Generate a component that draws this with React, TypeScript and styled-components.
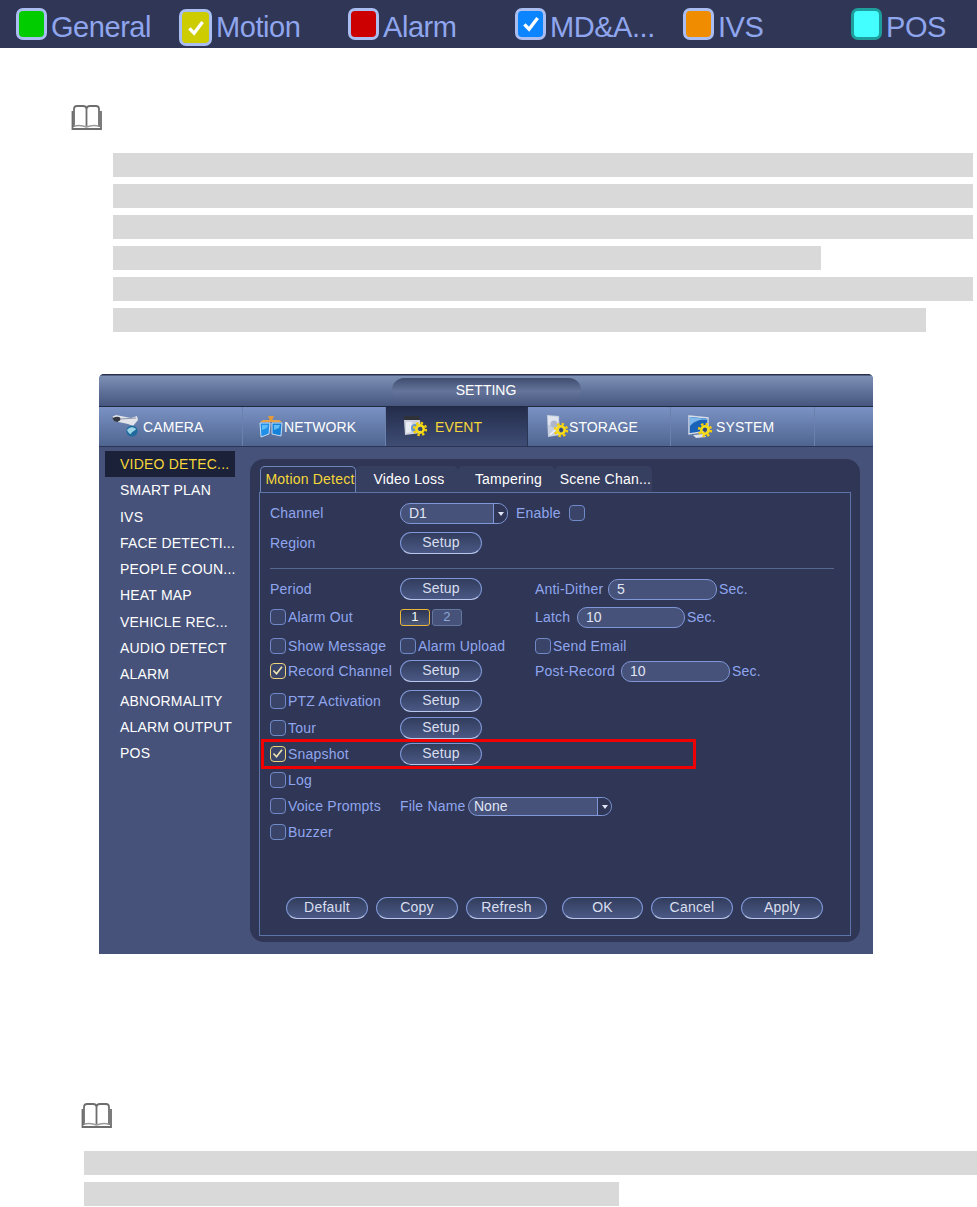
import React from 'react';
import styled, { createGlobalStyle } from 'styled-components';

const GlobalStyle = createGlobalStyle`
  html, body {
    margin: 0;
    padding: 0;
    background: #fff;
    font-family: "Liberation Sans", Arial, sans-serif;
  }
`;

const Page = styled.div`
  width: 977px;
  height: 1207px;
  overflow: hidden;
  display: flex;
  flex-direction: column;
`;

/* legend strip */
const Legend = styled.div`
  height: 48px;
  background: #2f3656;
  display: flex;
  padding-left: 16px;
  flex-shrink: 0;
`;
const LegendItem = styled.div<{ $width: number }>`
  width: ${(p) => p.$width}px;
  display: flex;
  align-items: flex-start;
  gap: 4px;
  color: #8fa6ee;
  font-size: 29px;
  letter-spacing: -0.45px;
`;
const LegendText = styled.span`
  margin-top: 11px;
  line-height: 33px;
`;
const Swatch = styled.div<{ $color: string; $ring?: string; $tall?: boolean }>`
  box-sizing: border-box;
  width: ${(p) => (p.$tall ? 33 : 31)}px;
  height: ${(p) => (p.$tall ? 37 : 32)}px;
  margin-top: ${(p) => (p.$tall ? 9 : 8)}px;
  border-radius: 7px;
  border: 3px solid ${(p) => p.$ring || '#a9bdf0'};
  background: ${(p) => p.$color};
  display: flex;
  align-items: center;
  justify-content: center;
  flex-shrink: 0;
`;

/* note blocks */
const NoteIcon = styled.div<{ $left: number; $top: number }>`
  margin: ${(p) => p.$top}px 0 0 ${(p) => p.$left}px;
  height: 25px;
  line-height: 0;
`;
const Bars = styled.div<{ $left: number; $top: number }>`
  margin: ${(p) => p.$top}px 0 0 ${(p) => p.$left}px;
  display: flex;
  flex-direction: column;
  gap: 7px;
`;
const Bar = styled.div<{ $width: number }>`
  height: 24px;
  width: ${(p) => p.$width}px;
  background: #d9d9d9;
`;

/* dvr window */
const Window = styled.div`
  margin: 42px 0 0 99px;
  width: 774px;
  height: 580px;
  flex-shrink: 0;
  display: flex;
  flex-direction: column;
  background: #465279;
  color: #fff;
  font-size: 14px;
  letter-spacing: 0.2px;
  border-radius: 5px 5px 0 0;
  overflow: hidden;
`;
const TitleBar = styled.div`
  box-sizing: border-box;
  height: 33px;
  display: flex;
  justify-content: center;
  align-items: center;
  background: linear-gradient(#26304a 0, #26304a 1px, #7d90b4 2px, #5f7199 55%, #46567f);
  border-bottom: 1px solid #1f2942;
`;
const TitlePill = styled.div`
  width: 189px;
  height: 24px;
  border-radius: 12px;
  background: linear-gradient(#3f4d70, #64749a 55%, #4f5e84);
  color: #fff;
  text-align: center;
  line-height: 24px;
  letter-spacing: 0;
`;
const TabBar = styled.div`
  box-sizing: border-box;
  height: 40px;
  display: flex;
  background: linear-gradient(#7a92c4, #4f6590);
  border-bottom: 1px solid #2a3556;
`;
const MainTab = styled.div<{ $active?: boolean; $width: number; $gap: number; $indent: number }>`
  box-sizing: border-box;
  width: ${(p) => p.$width}px;
  padding-left: ${(p) => p.$indent}px;
  display: flex;
  align-items: center;
  gap: ${(p) => p.$gap}px;
  color: ${(p) => (p.$active ? '#f5d63a' : '#fff')};
  background: ${(p) => (p.$active ? 'linear-gradient(#232c4a, #3f4d75)' : 'none')};
  border-right: 1px solid ${(p) => (p.$active ? '#2a3556' : '#6a80ad')};
  letter-spacing: 0.1px;
`;
const Body = styled.div`
  flex: 1;
  display: flex;
  min-height: 0;
`;
const SideMenu = styled.div`
  width: 151px;
  box-sizing: border-box;
  padding: 4px 0 0 6px;
  flex-shrink: 0;
`;
const SideItem = styled.div<{ $active?: boolean }>`
  width: 130px;
  height: 26.3px;
  line-height: 26.3px;
  padding-left: 15px;
  box-sizing: border-box;
  white-space: nowrap;
  color: ${(p) => (p.$active ? '#f5d63a' : '#fff')};
  background: ${(p) => (p.$active ? '#1a2138' : 'none')};
`;
const Panel = styled.div`
  width: 610px;
  margin: 12px 0;
  box-sizing: border-box;
  padding: 7px 9px 6px 9px;
  background: #2f3656;
  border-radius: 14px;
  display: flex;
  flex-direction: column;
`;
const SubTabs = styled.div`
  display: flex;
  height: 26px;
  padding-left: 1px;
  flex-shrink: 0;
`;
const SubTab = styled.div<{ $active?: boolean; $width: number }>`
  box-sizing: border-box;
  width: ${(p) => p.$width}px;
  padding-left: 4px;
  text-align: center;
  line-height: 26px;
  white-space: nowrap;
  color: ${(p) => (p.$active ? '#f5d63a' : '#fff')};
  background: ${(p) => (p.$active ? '#2f3656' : '#373f61')};
  border-radius: 5px 5px 0 0;
  ${(p) => p.$active && 'border: 1px solid #6f86bb; border-bottom: none; line-height: 24px;'}
`;
const Frame = styled.div`
  flex: 1;
  border: 1px solid #5d74a8;
  box-sizing: border-box;
  padding: 8px 17px 16px 10px;
  display: flex;
  flex-direction: column;
  color: #8fa6ee;
`;
const Row = styled.div<{ $gap?: number }>`
  position: relative;
  height: 24px;
  margin-top: ${(p) => p.$gap || 0}px;
  display: flex;
  align-items: center;
`;
const FirstCol = styled.div`
  width: 130px;
  display: flex;
  align-items: center;
  gap: 2px;
  white-space: nowrap;
  flex-shrink: 0;
`;
const MidCol = styled.div`
  width: 135px;
  display: flex;
  align-items: center;
  gap: 2px;
  white-space: nowrap;
  flex-shrink: 0;
`;
const Inline = styled.div`
  display: flex;
  align-items: center;
  gap: 2px;
  white-space: nowrap;
`;
const Caption = styled.span<{ $width?: number; $left?: number }>`
  display: inline-block;
  ${(p) => p.$width && `width: ${p.$width}px;`}
  ${(p) => p.$left && `margin-left: ${p.$left}px;`}
`;
const Divider = styled.div`
  height: 1px;
  background: #56688f;
  margin: 13px 0 8px 0;
  width: 564px;
`;
const Check = styled.div<{ $on?: boolean; $left?: number }>`
  box-sizing: border-box;
  width: 16px;
  height: 16px;
  border-radius: 4px;
  border: 1.5px solid ${(p) => (p.$on ? '#ecd27a' : '#7089c8')};
  background: #3a4468;
  line-height: 0;
  flex-shrink: 0;
  ${(p) => p.$left && `margin-left: ${p.$left}px;`}
`;
const OvalButton = styled.div<{ $width?: number }>`
  box-sizing: border-box;
  width: ${(p) => p.$width || 82}px;
  height: 22px;
  line-height: 19px;
  border-radius: 11px;
  border: 1.5px solid #7f97d6;
  border-bottom-color: #b9c7ec;
  background: linear-gradient(#323d5d, #4a5884);
  color: #d9dfef;
  text-align: center;
`;
const NumberButton = styled.div<{ $active?: boolean }>`
  box-sizing: border-box;
  width: 30px;
  height: 17px;
  line-height: 14px;
  border-radius: 3px;
  text-align: center;
  font-size: 13px;
  border: 1.5px solid ${(p) => (p.$active ? '#eab63a' : '#64789f')};
  background: ${(p) => (p.$active ? 'linear-gradient(#2d3654, #4c5878)' : '#46527a')};
  color: ${(p) => (p.$active ? '#f4f4f4' : '#8fa6d8')};
`;
const Field = styled.div<{ $width: number; $slim?: boolean }>`
  box-sizing: border-box;
  width: ${(p) => p.$width}px;
  height: ${(p) => (p.$slim ? 19 : 21)}px;
  line-height: ${(p) => (p.$slim ? 16 : 18)}px;
  padding-left: ${(p) => (p.$slim ? 5 : 8)}px;
  border-radius: 10px;
  border: 1.5px solid #7f97d6;
  background: #46527a;
  color: #e0e5f4;
  letter-spacing: 0;
  position: relative;
`;
const DropArrow = styled.div`
  position: absolute;
  top: 0;
  right: 0;
  bottom: 0;
  width: 13px;
  border-left: 1px solid #7f97d6;
  background: #2f3656;
  border-radius: 0 9px 9px 0;
  display: flex;
  align-items: center;
  justify-content: center;
  &::after {
    content: '';
    border: 3.5px solid transparent;
    border-top: 4px solid #dfe5f5;
    margin-top: 4px;
  }
`;
const Highlight = styled.div`
  position: absolute;
  left: -9px;
  top: -3px;
  width: 435px;
  height: 30px;
  box-sizing: border-box;
  border: 3px solid #f00000;
  pointer-events: none;
`;
const Footer = styled.div`
  margin-top: auto;
  padding-left: 16px;
  display: flex;
  gap: 8px;
`;
const FooterGroup = styled.div`
  display: flex;
  gap: 8px;
  & + & {
    margin-left: 7px;
  }
`;

const CheckMark = () => (
  <svg width="22" height="22" viewBox="0 0 16 16">
    <path d="M3.2 8.2 L6.6 11.8 L12.8 3.6" fill="none" stroke="#fff" strokeWidth="2.4" />
  </svg>
);

const Tick = () => (
  <svg width="13" height="13" viewBox="0 0 16 16">
    <path d="M3 8 L6.8 12 L13.5 3.5" fill="none" stroke="#f2e6b0" strokeWidth="2" />
  </svg>
);

const Book = () => (
  <svg width="32" height="25" viewBox="0 0 32 25">
    <path
      d="M3 22 L3 4 Q3 1 6 1 L12 1 Q15.5 1 15.5 4 L15.5 21 M15.5 4 Q15.5 1 19 1 L25 1 Q28 1 28 4 L28 22"
      fill="none"
      stroke="#6e6e6e"
      strokeWidth="1.8"
    />
    <path d="M1.5 6 L1.5 24 L30 24 L30 6" fill="none" stroke="#6e6e6e" strokeWidth="1.8" />
    <path d="M3 21 Q10 19.5 15.5 22 Q21 19.5 28 21" fill="none" stroke="#9a9a9a" strokeWidth="1.4" />
  </svg>
);

const Gear = ({ x, y }: { x: number; y: number }) => (
  <g transform={`translate(${x} ${y})`}>
    <circle r="6" fill="none" stroke="#f6cf0a" strokeWidth="2.4" strokeDasharray="2.4 2.3" />
    <circle r="3.7" fill="none" stroke="#f9dc14" strokeWidth="2.6" />
    <circle r="1.9" fill="#3a4668" />
  </g>
);

const CameraIcon = () => (
  <svg width="27" height="23" viewBox="0 0 27 23">
    <path d="M0 2 L4 0 L19 3 L25 1 L26 5 L21 11 L16 9 L2 6 Z" fill="#e2e4ea" />
    <path d="M0 2 L6 5 L6 7 L2 6 Z" fill="#23262f" />
    <ellipse cx="5" cy="4" rx="3.5" ry="2.3" fill="#343842" />
    <path d="M8 4 L24 3" stroke="#8d95a8" strokeWidth="1.2" />
    <circle cx="20" cy="16" r="5.6" fill="#1f6b9e" />
    <path d="M15 15 C17 12 21 11 24 14 C23 16 20 16 19 19 C17 19 16 17 15 15 Z" fill="#9ad3e6" />
  </svg>
);

const NetworkIcon = () => (
  <svg width="24" height="22" viewBox="0 0 24 22">
    <path d="M1 6 L4 4 L20 4 L23 6 Z" fill="#e8a347" />
    <path d="M9 0 L15 0 L13 5 L11 5 Z" fill="#e29a3c" />
    <path d="M1 7 L11 7 L10 18 L2 21 Z" fill="#1f8fe8" stroke="#e6f2fb" strokeWidth="0.8" />
    <path d="M13 7 L23 7 L22 20 L13 18 Z" fill="#1681da" stroke="#e6f2fb" strokeWidth="0.8" />
    <path d="M3 9 L9 9 L8 12 L3 14 Z" fill="#5fbcf5" />
    <path d="M15 9 L21 9 L20 12 L15 14 Z" fill="#5fbcf5" />
  </svg>
);

const EventIcon = () => (
  <svg width="24" height="21" viewBox="0 0 24 21">
    <path d="M1 0 L16 0 L17 4 L1 4 Z" fill="#30323a" />
    <path d="M1 4 L17 4 L18 17 L2 19 Z" fill="#cdd2dc" />
    <path d="M3 6 L9 6 L8 16 L3 17 Z" fill="#e9ecf2" />
    <circle cx="12" cy="12" r="4" fill="#6a9ad2" />
    <Gear x={17} y={13} />
  </svg>
);

const StorageIcon = () => (
  <svg width="22" height="23" viewBox="0 0 22 23">
    <path d="M0 0 L12 1 L13 20 L1 22 Z" fill="#c6cfdf" />
    <path d="M1 1 L11 2 L11 9 L1 10 Z" fill="#dfe5ef" />
    <circle cx="7" cy="9" r="3.5" fill="#aeb7ca" />
    <path d="M3 20 L10 13" stroke="#f1f3f8" strokeWidth="1.4" />
    <Gear x={14} y={15} />
  </svg>
);

const SystemIcon = () => (
  <svg width="28" height="24" viewBox="0 0 28 24">
    <path d="M1 1 L20 3 L20 16 L1 19 Z" fill="#1b63b8" stroke="#d6dce8" strokeWidth="1.4" />
    <path d="M2 11 C7 5 14 4 19 5 L19 4 L2 2 Z" fill="#7fb8ea" />
    <path d="M5 20 L16 19 L18 22 L8 23 Z" fill="#dde2ea" />
    <Gear x={17} y={15} />
  </svg>
);

const legend = [
  { label: 'General', color: '#00cc00', width: 163 },
  { label: 'Motion', color: '#cccc00', tall: true, check: true, width: 169 },
  { label: 'Alarm', color: '#cc0000', width: 167 },
  { label: 'MD&A...', color: '#0a84ff', check: true, width: 168 },
  { label: 'IVS', color: '#f08c00', width: 168 },
  { label: 'POS', color: '#44ffff', ring: '#1f9e9e', width: 120 },
];

const mainTabs = [
  { label: 'CAMERA', icon: <CameraIcon />, width: 144, indent: 13, gap: 4 },
  { label: 'NETWORK', icon: <NetworkIcon />, width: 143, indent: 16, gap: 1 },
  { label: 'EVENT', icon: <EventIcon />, width: 142, indent: 17, gap: 8, active: true },
  { label: 'STORAGE', icon: <StorageIcon />, width: 143, indent: 19, gap: 0 },
  { label: 'SYSTEM', icon: <SystemIcon />, width: 144, indent: 17, gap: 0 },
];

const sideItems = [
  'VIDEO DETEC...',
  'SMART PLAN',
  'IVS',
  'FACE DETECTI...',
  'PEOPLE COUN...',
  'HEAT MAP',
  'VEHICLE REC...',
  'AUDIO DETECT',
  'ALARM',
  'ABNORMALITY',
  'ALARM OUTPUT',
  'POS',
];

const subTabs = [
  { label: 'Motion Detect', width: 96, active: true },
  { label: 'Video Loss', width: 102 },
  { label: 'Tampering', width: 97 },
  { label: 'Scene Chan...', width: 97 },
];

const CheckLabel = ({ label, on }: { label: string; on?: boolean }) => (
  <>
    <Check $on={on}>{on && <Tick />}</Check>
    <span>{label}</span>
  </>
);

const App = () => {
  return (
    <Page>
      <GlobalStyle />
      <Legend>
        {legend.map((item) => (
          <LegendItem key={item.label} $width={item.width}>
            <Swatch $color={item.color} $ring={item.ring} $tall={item.tall}>
              {item.check && <CheckMark />}
            </Swatch>
            <LegendText>{item.label}</LegendText>
          </LegendItem>
        ))}
      </Legend>

      <NoteIcon $left={71} $top={57}>
        <Book />
      </NoteIcon>
      <Bars $left={113} $top={23}>
        <Bar $width={860} />
        <Bar $width={860} />
        <Bar $width={860} />
        <Bar $width={708} />
        <Bar $width={860} />
        <Bar $width={813} />
      </Bars>

      <Window>
        <TitleBar>
          <TitlePill>SETTING</TitlePill>
        </TitleBar>
        <TabBar>
          {mainTabs.map((tab) => (
            <MainTab
              key={tab.label}
              $active={tab.active}
              $width={tab.width}
              $gap={tab.gap}
              $indent={tab.indent}
            >
              {tab.icon}
              {tab.label}
            </MainTab>
          ))}
        </TabBar>
        <Body>
          <SideMenu>
            {sideItems.map((item, i) => (
              <SideItem key={item} $active={i === 0}>
                {item}
              </SideItem>
            ))}
          </SideMenu>
          <Panel>
            <SubTabs>
              {subTabs.map((tab) => (
                <SubTab key={tab.label} $active={tab.active} $width={tab.width}>
                  {tab.label}
                </SubTab>
              ))}
            </SubTabs>
            <Frame>
              <Row>
                <FirstCol>Channel</FirstCol>
                <Inline>
                  <Field $width={108}>
                    D1
                    <DropArrow />
                  </Field>
                  <Caption $left={6}>Enable</Caption>
                  <Check $left={6} />
                </Inline>
              </Row>
              <Row $gap={6}>
                <FirstCol>Region</FirstCol>
                <OvalButton>Setup</OvalButton>
              </Row>
              <Divider />
              <Row>
                <FirstCol>Period</FirstCol>
                <MidCol>
                  <OvalButton>Setup</OvalButton>
                </MidCol>
                <Inline>
                  <Caption $width={71}>Anti-Dither</Caption>
                  <Field $width={109}>5</Field>
                  <span>Sec.</span>
                </Inline>
              </Row>
              <Row $gap={4}>
                <FirstCol>
                  <CheckLabel label="Alarm Out" />
                </FirstCol>
                <MidCol>
                  <NumberButton $active>1</NumberButton>
                  <NumberButton>2</NumberButton>
                </MidCol>
                <Inline>
                  <Caption $width={40}>Latch</Caption>
                  <Field $width={108}>10</Field>
                  <span>Sec.</span>
                </Inline>
              </Row>
              <Row $gap={5}>
                <FirstCol>
                  <CheckLabel label="Show Message" />
                </FirstCol>
                <MidCol>
                  <CheckLabel label="Alarm Upload" />
                </MidCol>
                <Inline>
                  <CheckLabel label="Send Email" />
                </Inline>
              </Row>
              <Row $gap={1}>
                <FirstCol>
                  <CheckLabel label="Record Channel" on />
                </FirstCol>
                <MidCol>
                  <OvalButton>Setup</OvalButton>
                </MidCol>
                <Inline>
                  <Caption $width={84}>Post-Record</Caption>
                  <Field $width={109}>10</Field>
                  <span>Sec.</span>
                </Inline>
              </Row>
              <Row $gap={6}>
                <FirstCol>
                  <CheckLabel label="PTZ Activation" />
                </FirstCol>
                <OvalButton>Setup</OvalButton>
              </Row>
              <Row $gap={3}>
                <FirstCol>
                  <CheckLabel label="Tour" />
                </FirstCol>
                <OvalButton>Setup</OvalButton>
              </Row>
              <Row $gap={2}>
                <FirstCol>
                  <CheckLabel label="Snapshot" on />
                </FirstCol>
                <OvalButton>Setup</OvalButton>
                <Highlight />
              </Row>
              <Row $gap={2}>
                <FirstCol>
                  <CheckLabel label="Log" />
                </FirstCol>
              </Row>
              <Row $gap={2}>
                <FirstCol>
                  <CheckLabel label="Voice Prompts" />
                </FirstCol>
                <Inline>
                  <Caption $width={66}>File Name</Caption>
                  <Field $width={144} $slim>
                    None
                    <DropArrow />
                  </Field>
                </Inline>
              </Row>
              <Row $gap={2}>
                <FirstCol>
                  <CheckLabel label="Buzzer" />
                </FirstCol>
              </Row>
              <Footer>
                <FooterGroup>
                  <OvalButton>Default</OvalButton>
                  <OvalButton>Copy</OvalButton>
                  <OvalButton $width={81}>Refresh</OvalButton>
                </FooterGroup>
                <FooterGroup>
                  <OvalButton $width={81}>OK</OvalButton>
                  <OvalButton>Cancel</OvalButton>
                  <OvalButton>Apply</OvalButton>
                </FooterGroup>
              </Footer>
            </Frame>
          </Panel>
        </Body>
      </Window>

      <NoteIcon $left={81} $top={149}>
        <Book />
      </NoteIcon>
      <Bars $left={84} $top={23}>
        <Bar $width={893} />
        <Bar $width={535} />
      </Bars>
    </Page>
  );
};

export default App;
